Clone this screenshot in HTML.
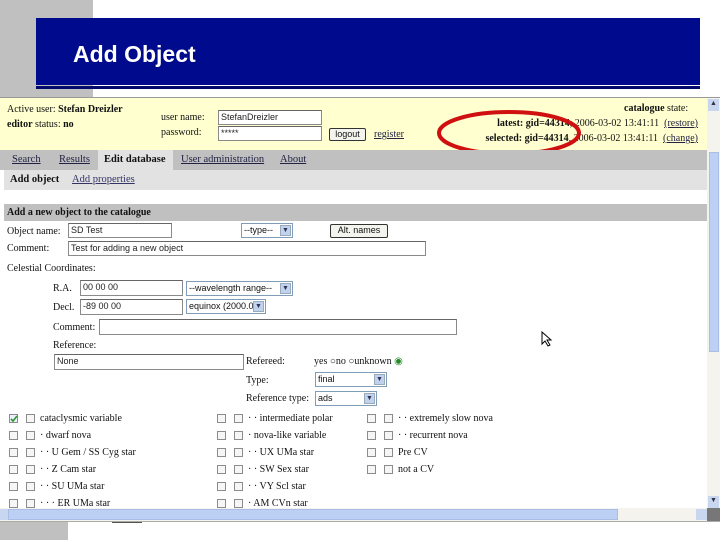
<!DOCTYPE html>
<html><head><meta charset="utf-8"><style>
*{margin:0;padding:0;box-sizing:border-box}
body{width:720px;height:540px;position:relative;overflow:hidden;background:#fff;font-family:"Liberation Serif",serif;font-size:10px;color:#111}
.a{position:absolute;white-space:nowrap}
.in{position:absolute;border:1px solid #8a8a8a;border-top-color:#666;background:#fff;font-family:"Liberation Sans",sans-serif;font-size:9px;padding:1px 2px;line-height:11px;color:#222}
.sel{position:absolute;border:1px solid #7f9db9;background:#fff;font-family:"Liberation Sans",sans-serif;font-size:9px;padding:1px 2px;line-height:11px}
.sel i{position:absolute;right:1px;top:1px;width:11px;height:11px;background:#c1d2ee;border:1px solid #9ab;font-size:7px;color:#335;text-align:center;line-height:9px;font-style:normal}
.btn{position:absolute;border:1px solid #333;border-radius:2px;background:#f4f4ee;font-family:"Liberation Sans",sans-serif;font-size:9px;text-align:center;line-height:11px}
.cb{position:absolute;width:9px;height:9px;border:1px solid #8c8c8c;background:#f6f6f6}
u{color:#224}
</style></head><body>
<div class="a" style="left:0;top:0;width:93px;height:100px;background:#c0c0c0"></div>
<div class="a" style="left:0;top:522px;width:68px;height:18px;background:#c0c0c0"></div>
<div class="a" style="left:36px;top:18px;width:664px;height:67px;background:#000a8c"></div>
<div class="a" style="left:36px;top:86px;width:664px;height:3px;background:#000a6c"></div>
<div class="a" style="left:73px;top:41px;font-family:'Liberation Sans',sans-serif;font-weight:bold;font-size:23px;color:#fff">Add Object</div>

<div class="a" style="left:0;top:97px;width:720px;height:1px;background:#999"></div>
<div class="a" style="left:0;top:98px;width:707px;height:52px;background:#ffffd0"></div>
<div class="a" style="left:7px;top:104px">Active user: <b>Stefan Dreizler</b></div>
<div class="a" style="left:7px;top:119px"><b>editor</b> status: <b>no</b></div>
<div class="a" style="left:161px;top:112px">user name:</div>
<div class="a" style="left:161px;top:127px">password:</div>
<div class="in" style="left:218px;top:110px;width:104px;height:15px">StefanDreizler</div>
<div class="in" style="left:218px;top:126px;width:104px;height:15px">*****</div>
<div class="btn" style="left:329px;top:128px;width:37px;height:13px">logout</div>
<div class="a" style="left:374px;top:129px"><u>register</u></div>
<div class="a" style="left:624px;top:103px"><b>catalogue</b> state:</div>
<div class="a" style="right:22px;top:118px;text-align:right"><b>latest: gid=44314</b>, 2006-03-02 13:41:11 &nbsp;<u>(restore)</u></div>
<div class="a" style="right:22px;top:133px;text-align:right"><b>selected: gid=44314</b>, 2006-03-02 13:41:11 &nbsp;<u>(change)</u></div>
<svg class="a" style="left:430px;top:106px" width="160" height="56"><ellipse cx="79" cy="27" rx="70" ry="21" fill="none" stroke="#d01010" stroke-width="4"/></svg>

<div class="a" style="left:0;top:150px;width:707px;height:20px;background:#c0c0c0"></div>
<div class="a" style="left:98px;top:150px;width:75px;height:20px;background:#e2e2e2"></div>
<div class="a" style="left:12px;top:154px;font-size:10.5px"><u>Search</u></div>
<div class="a" style="left:59px;top:154px;font-size:10.5px"><u>Results</u></div>
<div class="a" style="left:104px;top:154px;font-size:10.5px"><b>Edit database</b></div>
<div class="a" style="left:181px;top:154px;font-size:10.5px"><u>User administration</u></div>
<div class="a" style="left:280px;top:154px;font-size:10.5px"><u>About</u></div>
<div class="a" style="left:4px;top:170px;width:703px;height:20px;background:#e2e2e2"></div>
<div class="a" style="left:10px;top:174px;font-size:10.5px"><b>Add object</b></div>
<div class="a" style="left:72px;top:174px;font-size:10.5px"><u style="color:#336">Add properties</u></div>

<div class="a" style="left:4px;top:204px;width:703px;height:17px;background:#c0c0c0"></div>
<div class="a" style="left:7px;top:207px"><b>Add a new object to the catalogue</b></div>
<div class="a" style="left:7px;top:226px">Object name:</div>
<div class="in" style="left:68px;top:223px;width:104px;height:15px">SD Test</div>
<div class="sel" style="left:241px;top:223px;width:52px;height:15px">--type--<i>&#9660;</i></div>
<div class="btn" style="left:330px;top:224px;width:58px;height:14px">Alt. names</div>
<div class="a" style="left:7px;top:243px">Comment:</div>
<div class="in" style="left:68px;top:241px;width:358px;height:15px">Test for adding a new object</div>
<div class="a" style="left:7px;top:263px">Celestial Coordinates:</div>
<div class="a" style="left:53px;top:283px">R.A.</div>
<div class="in" style="left:80px;top:280px;width:103px;height:16px">00 00 00</div>
<div class="sel" style="left:186px;top:281px;width:107px;height:15px">--wavelength range--<i>&#9660;</i></div>
<div class="a" style="left:53px;top:302px">Decl.</div>
<div class="in" style="left:80px;top:299px;width:103px;height:16px">-89 00 00</div>
<div class="sel" style="left:186px;top:299px;width:80px;height:15px">equinox (2000.0)<i>&#9660;</i></div>
<div class="a" style="left:53px;top:322px">Comment:</div>
<div class="in" style="left:99px;top:319px;width:358px;height:16px"></div>
<div class="a" style="left:53px;top:340px">Reference:</div>
<div class="in" style="left:54px;top:354px;width:190px;height:16px">None</div>
<div class="a" style="left:246px;top:356px">Refereed:</div>
<div class="a" style="left:314px;top:356px">yes &#9675;no &#9675;unknown <span style="color:#2a8a2a">&#9673;</span></div>
<div class="a" style="left:246px;top:375px">Type:</div>
<div class="sel" style="left:315px;top:372px;width:72px;height:15px">final<i>&#9660;</i></div>
<div class="a" style="left:246px;top:393px">Reference type:</div>
<div class="sel" style="left:315px;top:391px;width:62px;height:15px">ads<i>&#9660;</i></div>
<svg class="a" style="left:541px;top:331px" width="12" height="16"><path d="M1 1 L1 13 L4 10 L7 15 L9 14 L6 9 L10 9 Z" fill="#fff" stroke="#000"/></svg>

<div class="cb" style="left:9px;top:414px;background:#eef"><svg width="8" height="8" style="position:absolute;left:0;top:0"><path d="M1 4 L3 6 L7 1" stroke="#2a9a2a" stroke-width="1.6" fill="none"/></svg></div>
<div class="cb" style="left:26px;top:414px"></div><div class="a" style="left:40px;top:413px">cataclysmic variable</div>
<div class="cb" style="left:9px;top:431px"></div><div class="cb" style="left:26px;top:431px"></div><div class="a" style="left:40px;top:430px">&middot; dwarf nova</div>
<div class="cb" style="left:9px;top:448px"></div><div class="cb" style="left:26px;top:448px"></div><div class="a" style="left:40px;top:447px">&middot; &middot; U Gem / SS Cyg star</div>
<div class="cb" style="left:9px;top:465px"></div><div class="cb" style="left:26px;top:465px"></div><div class="a" style="left:40px;top:464px">&middot; &middot; Z Cam star</div>
<div class="cb" style="left:9px;top:482px"></div><div class="cb" style="left:26px;top:482px"></div><div class="a" style="left:40px;top:481px">&middot; &middot; SU UMa star</div>
<div class="cb" style="left:9px;top:499px"></div><div class="cb" style="left:26px;top:499px"></div><div class="a" style="left:40px;top:498px">&middot; &middot; &middot; ER UMa star</div>

<div class="cb" style="left:217px;top:414px"></div><div class="cb" style="left:234px;top:414px"></div><div class="a" style="left:248px;top:413px">&middot; &middot; intermediate polar</div>
<div class="cb" style="left:217px;top:431px"></div><div class="cb" style="left:234px;top:431px"></div><div class="a" style="left:248px;top:430px">&middot; nova-like variable</div>
<div class="cb" style="left:217px;top:448px"></div><div class="cb" style="left:234px;top:448px"></div><div class="a" style="left:248px;top:447px">&middot; &middot; UX UMa star</div>
<div class="cb" style="left:217px;top:465px"></div><div class="cb" style="left:234px;top:465px"></div><div class="a" style="left:248px;top:464px">&middot; &middot; SW Sex star</div>
<div class="cb" style="left:217px;top:482px"></div><div class="cb" style="left:234px;top:482px"></div><div class="a" style="left:248px;top:481px">&middot; &middot; VY Scl star</div>
<div class="cb" style="left:217px;top:499px"></div><div class="cb" style="left:234px;top:499px"></div><div class="a" style="left:248px;top:498px">&middot; AM CVn star</div>

<div class="cb" style="left:367px;top:414px"></div><div class="cb" style="left:384px;top:414px"></div><div class="a" style="left:398px;top:413px">&middot; &middot; extremely slow nova</div>
<div class="cb" style="left:367px;top:431px"></div><div class="cb" style="left:384px;top:431px"></div><div class="a" style="left:398px;top:430px">&middot; &middot; recurrent nova</div>
<div class="cb" style="left:367px;top:448px"></div><div class="cb" style="left:384px;top:448px"></div><div class="a" style="left:398px;top:447px">Pre CV</div>
<div class="cb" style="left:367px;top:465px"></div><div class="cb" style="left:384px;top:465px"></div><div class="a" style="left:398px;top:464px">not a CV</div>

<div class="a" style="left:707px;top:98px;width:13px;height:411px;background:#f4f3ee"></div>
<div class="a" style="left:708px;top:99px;width:11px;height:12px;background:#c8d6f0;font-size:7px;text-align:center;color:#334">&#9650;</div>
<div class="a" style="left:709px;top:152px;width:10px;height:200px;background:#bcd0f4;border:1px solid #a9bde6"></div>
<div class="a" style="left:708px;top:496px;width:11px;height:12px;background:#c8d6f0;font-size:7px;text-align:center;color:#334">&#9660;</div>
<div class="a" style="left:0;top:508px;width:707px;height:13px;background:#f4f3ee"></div>
<div class="a" style="left:0;top:509px;width:8px;height:11px;background:#c8d6f0"></div>
<div class="a" style="left:8px;top:509px;width:610px;height:11px;background:#bcd0f4;border:1px solid #a9bde6"></div>
<div class="a" style="left:696px;top:509px;width:11px;height:11px;background:#c8d6f0"></div>
<div class="a" style="left:707px;top:508px;width:13px;height:13px;background:#777"></div>
<div class="a" style="left:0;top:521px;width:720px;height:1px;background:#aaa"></div>
<div class="a" style="left:112px;top:522px;width:30px;height:1px;background:#555"></div>
</body></html>
